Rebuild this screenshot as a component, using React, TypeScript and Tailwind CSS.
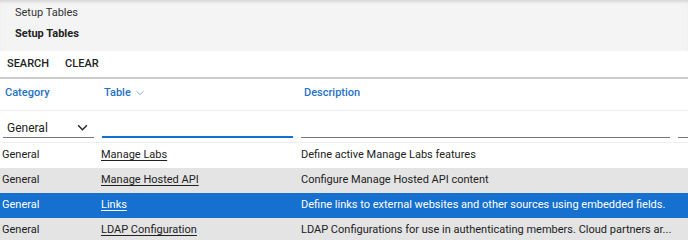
import React from "react";

const rows = [
  { cat: "General", table: "Manage Labs", desc: "Define active Manage Labs features", bg: "bg-white", sel: false },
  { cat: "General", table: "Manage Hosted API", desc: "Configure Manage Hosted API content", bg: "bg-[#e4e4e4]", sel: false },
  { cat: "General", table: "Links", desc: "Define links to external websites and other sources using embedded fields.", bg: "bg-[#1670cf]", sel: true },
  { cat: "General", table: "LDAP Configuration", desc: "LDAP Configurations for use in authenticating members. Cloud partners ar...", bg: "bg-[#e4e4e4]", sel: false },
];

function Chevron({ className, w = 1.6 }: { className?: string; w?: number }) {
  return (
    <svg viewBox="0 0 12 8" className={className} fill="none" stroke="currentColor">
      <path d="M1 1.5 L6 6.5 L11 1.5" strokeWidth={w} />
    </svg>
  );
}

export default function App() {
  return (
    <div className="w-[688px] h-[240px] overflow-hidden bg-white text-[11px] text-[#222]" style={{ fontFamily: "Roboto, 'Noto Sans', sans-serif" }}>
      <div className="h-[51px] bg-[#f4f4f4] shadow-[inset_0_3px_3px_-1px_rgba(0,0,0,0.12)] pl-[15px] pt-[4px] flex flex-col">
        <div className="h-[17px] leading-[17px] text-[#333]">Setup Tables</div>
        <div className="h-[25px] leading-[25px] font-bold text-[#222]">Setup Tables</div>
      </div>
      <div className="h-[26px] flex items-center gap-[16px] pl-[7px] font-medium text-[#222]">
        <span>SEARCH</span>
        <span>CLEAR</span>
      </div>
      <div className="h-[2px] bg-[#cccccc]" />
      <div className="h-[32px] flex items-center pb-[3px] font-medium text-[#1f73c9] border-b border-[#eeeeee]">
        <div className="w-[101px] pl-[5px]">Category</div>
        <div className="w-[200px] pl-[3px] flex items-center gap-[5px]">
          Table <Chevron className="w-[8px] h-[6px] text-[#5b8fd0]" w={1.2} />
        </div>
        <div className="pl-[3px]">Description</div>
      </div>
      <div className="h-[32px] flex items-end pb-[4px] border-b border-[#eeeeee]">
        <div className="w-[92px] ml-[3px] h-[20px] border-b border-[#777] flex items-center justify-between pl-[4px] pr-[6px] text-[12px]">
          <span>General</span>
          <Chevron className="w-[11px] h-[7px] text-[#222]" />
        </div>
        <div className="w-[192px] ml-[8px] h-[20px] border-b-2 border-[#1670cf]" />
        <div className="w-[372px] ml-[8px] h-[20px] border-b border-[#777]" />
        <div className="w-[10px] ml-[8px] h-[20px] border-b border-[#777]" />
      </div>
      <div className="flex flex-col">
        {rows.map((r, i) => (
          <div key={i} className={`h-[25px] flex items-center ${r.bg} ${r.sel ? "text-white" : "text-[#222]"}`}>
            <div className="w-[101px] pl-[2px]">{r.cat}</div>
            <div className="w-[200px]"><span className="underline underline-offset-2">{r.table}</span></div>
            <div className="flex-1 whitespace-nowrap">{r.desc}</div>
          </div>
        ))}
      </div>
    </div>
  );
}
